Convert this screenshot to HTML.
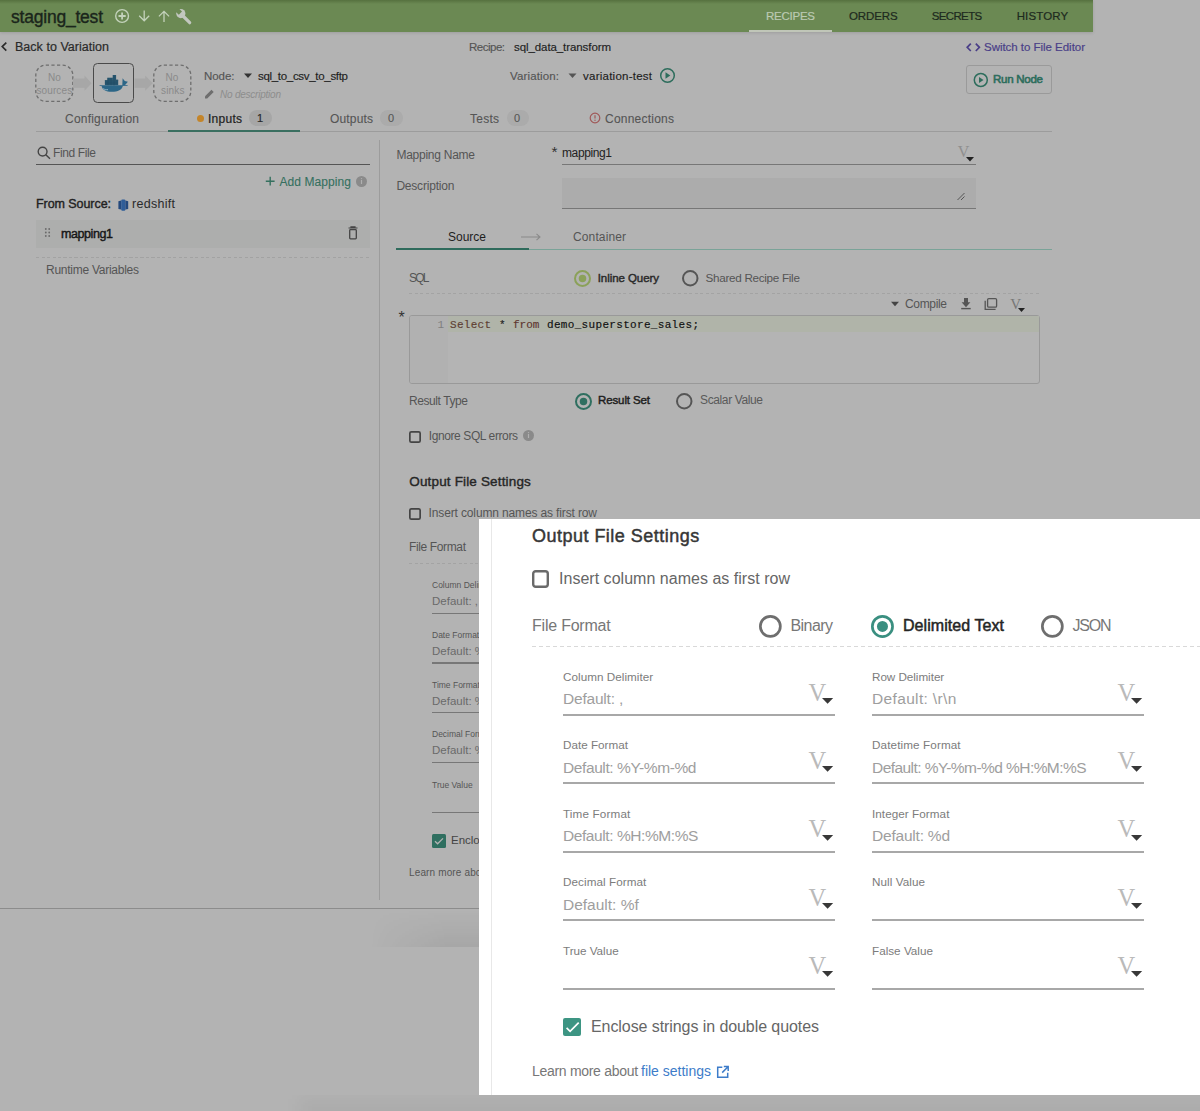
<!DOCTYPE html>
<html><head><meta charset="utf-8"><title>staging_test</title>
<style>
html,body{margin:0;padding:0;}
body{width:1200px;height:1111px;position:relative;overflow:hidden;background:#b3b3b3;font-family:"Liberation Sans",sans-serif;}
.t{position:absolute;white-space:nowrap;line-height:1;}
.r{position:absolute;}
svg.r{overflow:visible;}
</style></head><body>
<div class="r" style="left:0px;top:0px;width:1093px;height:32px;background:#6b8953;box-shadow:0 1px 3px rgba(0,0,0,0.12);"></div>
<div class="r" style="left:0px;top:0px;width:1093px;height:4px;background:linear-gradient(#56713f,#6b8953);"></div>
<div class="t" style="left:11px;top:9.00px;font-size:17.5px;color:#1a251b;font-weight:400;font-style:normal;font-family:'Liberation Sans',sans-serif;letter-spacing:-0.215px;-webkit-text-stroke:0.35px #1a251b;">staging_test</div>
<svg class="r" style="left:112px;top:6px" width="84" height="22" viewBox="112 6 84 22">
<g fill="none" stroke="#c3d2bb" stroke-linecap="butt">
<circle cx="122.1" cy="16" r="6.4" stroke-width="1.4"/><path d="M122.1 12.4v7.2M118.5 16h7.2" stroke-width="1.8"/>
<path d="M144.2 10.4v10.4M139.2 15.8l5 5 5-5" stroke-width="1.3"/>
<path d="M164 22v-10.6M158.9 16.4l5.1-5.1 5.1 5.1" stroke-width="1.3"/>
</g>
<path d="M181.5 14.5l8.2 8.2" stroke="#c2c7bf" stroke-width="3.2" stroke-linecap="round"/>
<circle cx="180.8" cy="13.6" r="4.6" fill="#c2c7bf"/>
<path d="M175.2 11.2l3.2-3.2 3.6 3.6-3.2 3.2z" fill="#6b8953"/>
</svg>
<div class="t" style="left:766px;top:11.00px;font-size:11.5px;color:#bccab3;font-weight:400;font-style:normal;font-family:'Liberation Sans',sans-serif;letter-spacing:-0.248px;-webkit-text-stroke:0.2px #bccab3;">RECIPES</div>
<div class="t" style="left:849px;top:11.00px;font-size:11.5px;color:#1d2a1e;font-weight:400;font-style:normal;font-family:'Liberation Sans',sans-serif;letter-spacing:-0.100px;-webkit-text-stroke:0.2px #1d2a1e;">ORDERS</div>
<div class="t" style="left:931.7px;top:11.00px;font-size:11.5px;color:#1d2a1e;font-weight:400;font-style:normal;font-family:'Liberation Sans',sans-serif;letter-spacing:-0.636px;-webkit-text-stroke:0.2px #1d2a1e;">SECRETS</div>
<div class="t" style="left:1016.7px;top:11.00px;font-size:11.5px;color:#1d2a1e;font-weight:400;font-style:normal;font-family:'Liberation Sans',sans-serif;letter-spacing:0.117px;-webkit-text-stroke:0.2px #1d2a1e;">HISTORY</div>
<div class="r" style="left:749px;top:30px;width:83px;height:2px;background:#c0c6b8;"></div>
<svg class="r" style="left:0px;top:40px" width="10" height="14" viewBox="0 40 10 14"><path d="M6.3 42.6L2.2 46.6l4.1 4" fill="none" stroke="#2a2a2a" stroke-width="1.6"/></svg>
<div class="t" style="left:15px;top:41.00px;font-size:12.5px;color:#2a2a2a;font-weight:400;font-style:normal;font-family:'Liberation Sans',sans-serif;letter-spacing:0.027px;-webkit-text-stroke:0.2px #2a2a2a;">Back to Variation</div>
<div class="t" style="left:469px;top:42.00px;font-size:11.5px;color:#555;font-weight:400;font-style:normal;font-family:'Liberation Sans',sans-serif;letter-spacing:-0.498px;-webkit-text-stroke:0.15px #555;">Recipe:</div>
<div class="t" style="left:514px;top:42.00px;font-size:11.5px;color:#1e1e1e;font-weight:400;font-style:normal;font-family:'Liberation Sans',sans-serif;letter-spacing:-0.084px;-webkit-text-stroke:0.15px #1e1e1e;">sql_data_transform</div>
<svg class="r" style="left:964px;top:41px" width="20" height="12" viewBox="964 41 20 12"><path d="M970.8 43.6L967.2 47.3l3.6 3.7M975.8 43.6l3.6 3.7-3.6 3.7" fill="none" stroke="#4a3f88" stroke-width="1.7"/></svg>
<div class="t" style="left:984px;top:42.00px;font-size:11.5px;color:#4a3f88;font-weight:400;font-style:normal;font-family:'Liberation Sans',sans-serif;letter-spacing:-0.031px;-webkit-text-stroke:0.2px #4a3f88;">Switch to File Editor</div>
<svg class="r" style="left:33px;top:62px" width="162" height="44" viewBox="33 62 162 44">
<rect x="35.8" y="65.2" width="37" height="36.2" rx="10" fill="none" stroke="#6e6e6e" stroke-width="1.3" stroke-dasharray="3.2 2.4"/>
<rect x="153.8" y="65.2" width="37" height="36.2" rx="10" fill="none" stroke="#6e6e6e" stroke-width="1.3" stroke-dasharray="3.2 2.4"/>
<path d="M73 78.6h11.5v-3l7.1 7.6-7.1 7.6v-3h-11.5z" fill="#a7a7a7"/>
<path d="M134.5 78.6h10.7v-3l7.5 7.6-7.5 7.6v-3h-10.7z" fill="#a7a7a7"/>
</svg>
<div class="t" style="left:47.9px;top:73.00px;font-size:10px;color:#8a8a8a;font-weight:400;font-style:normal;font-family:'Liberation Sans',sans-serif;letter-spacing:0.017px;">No</div>
<div class="t" style="left:36.4px;top:86.00px;font-size:10px;color:#8a8a8a;font-weight:400;font-style:normal;font-family:'Liberation Sans',sans-serif;letter-spacing:0.131px;">sources</div>
<div class="t" style="left:165.5px;top:73.00px;font-size:10px;color:#8a8a8a;font-weight:400;font-style:normal;font-family:'Liberation Sans',sans-serif;letter-spacing:0.017px;">No</div>
<div class="t" style="left:161px;top:86.00px;font-size:10px;color:#8a8a8a;font-weight:400;font-style:normal;font-family:'Liberation Sans',sans-serif;letter-spacing:0.179px;">sinks</div>
<div class="r" style="left:92.5px;top:62.6px;width:41.6px;height:40.8px;border:1.5px solid #4a4a4a;border-radius:4.5px;box-sizing:border-box;"></div>
<svg class="r" style="left:96px;top:70px" width="36" height="26" viewBox="96 70 36 26">
<g fill="#27566f">
<rect x="104.9" y="80.2" width="13.3" height="5"/>
<rect x="107.3" y="77.7" width="5.6" height="3"/>
<rect x="112.7" y="75" width="3.4" height="5.6"/>
<rect x="116" y="79.6" width="2.2" height="1"/>
</g>
<path d="M99.6 85.3h28v.6h-4.8c-.6 3.6-4.9 5.9-11 5.9-5.9 0-9.6-2.4-10.2-5.9h-2z" fill="#2c6687"/>
<path d="M122.3 85.8l.3-7.5 2.2 2.8 3.1.6-3 3.6z" fill="#2c6687"/>
<path d="M104.8 80.7h13M104.8 83h13M108 78.2v7M111 78.2v7M114 75.5v10" stroke="#214a60" stroke-width=".5"/>
<path d="M103.2 88.6c1.3.9 3 1.3 4.8 1.1" stroke="#8fb3c6" stroke-width="1" fill="none"/>
</svg>
<div class="t" style="left:204px;top:71.00px;font-size:11.5px;color:#555;font-weight:400;font-style:normal;font-family:'Liberation Sans',sans-serif;letter-spacing:-0.071px;-webkit-text-stroke:0.15px #555;">Node:</div>
<svg class="r" style="left:242px;top:72px" width="12" height="8" viewBox="242 72 12 8"><path d="M244 73.5h8l-4 4.5z" fill="#333"/></svg>
<div class="t" style="left:258px;top:71.00px;font-size:11.5px;color:#1e1e1e;font-weight:400;font-style:normal;font-family:'Liberation Sans',sans-serif;letter-spacing:-0.309px;-webkit-text-stroke:0.15px #1e1e1e;">sql_to_csv_to_sftp</div>
<svg class="r" style="left:204px;top:88px" width="12" height="12" viewBox="204 88 12 12"><path d="M205 98.5v-2.2l6.5-6.5 2.2 2.2-6.5 6.5z" fill="#6e6e6e"/></svg>
<div class="t" style="left:220px;top:90.00px;font-size:10px;color:#8d8d8d;font-weight:400;font-style:italic;font-family:'Liberation Sans',sans-serif;letter-spacing:-0.224px;">No description</div>
<div class="t" style="left:510px;top:71.00px;font-size:11.5px;color:#555;font-weight:400;font-style:normal;font-family:'Liberation Sans',sans-serif;letter-spacing:0.141px;-webkit-text-stroke:0.15px #555;">Variation:</div>
<svg class="r" style="left:566px;top:72px" width="12" height="8" viewBox="566 72 12 8"><path d="M568.5 73.5h8l-4 4.5z" fill="#555"/></svg>
<div class="t" style="left:583px;top:71.00px;font-size:11.5px;color:#1e1e1e;font-weight:400;font-style:normal;font-family:'Liberation Sans',sans-serif;letter-spacing:0.244px;-webkit-text-stroke:0.15px #1e1e1e;">variation-test</div>
<svg class="r" style="left:658px;top:66px" width="20" height="20" viewBox="658 66 20 20"><circle cx="667.5" cy="75.5" r="6.8" fill="none" stroke="#2d6d5c" stroke-width="1.5"/><path d="M665.5 72.3v6.4l4.8-3.2z" fill="#2d6d5c"/></svg>
<div class="r" style="left:966px;top:65px;width:86px;height:29px;border:1px solid #9a9a9a;border-radius:3px;box-sizing:border-box;"></div>
<svg class="r" style="left:972px;top:72px" width="18" height="18" viewBox="972 72 18 18"><circle cx="980.8" cy="80" r="6.5" fill="none" stroke="#2d6d5c" stroke-width="1.5"/><path d="M979 77v6l4.5-3z" fill="#2d6d5c"/></svg>
<div class="t" style="left:993px;top:74.00px;font-size:11.5px;color:#2d6d5c;font-weight:400;font-style:normal;font-family:'Liberation Sans',sans-serif;letter-spacing:-0.254px;-webkit-text-stroke:0.6px #2d6d5c;">Run Node</div>
<div class="t" style="left:65px;top:113.00px;font-size:12px;color:#555;font-weight:400;font-style:normal;font-family:'Liberation Sans',sans-serif;letter-spacing:0.219px;-webkit-text-stroke:0.1px #555;">Configuration</div>
<div class="r" style="left:197px;top:114.5px;width:7px;height:7px;border-radius:50%;background:#c4852a"></div>
<div class="t" style="left:208px;top:113.00px;font-size:12px;color:#1e1e1e;font-weight:400;font-style:normal;font-family:'Liberation Sans',sans-serif;letter-spacing:0.263px;-webkit-text-stroke:0.2px #1e1e1e;">Inputs</div>
<div class="r" style="left:249px;top:110px;width:23px;height:16px;background:#a6a6a6;border-radius:8px;"></div>
<div class="t" style="left:257px;top:113.00px;font-size:11px;color:#2a2a2a;font-weight:400;font-style:normal;font-family:'Liberation Sans',sans-serif;-webkit-text-stroke:0.2px #2a2a2a;">1</div>
<div class="t" style="left:330px;top:113.00px;font-size:12px;color:#555;font-weight:400;font-style:normal;font-family:'Liberation Sans',sans-serif;letter-spacing:0.163px;-webkit-text-stroke:0.1px #555;">Outputs</div>
<div class="r" style="left:380px;top:110px;width:23px;height:16px;background:#ababab;border-radius:8px;"></div>
<div class="t" style="left:388px;top:113.00px;font-size:11px;color:#555;font-weight:400;font-style:normal;font-family:'Liberation Sans',sans-serif;-webkit-text-stroke:0.1px #555;">0</div>
<div class="t" style="left:470px;top:113.00px;font-size:12px;color:#555;font-weight:400;font-style:normal;font-family:'Liberation Sans',sans-serif;letter-spacing:0.248px;-webkit-text-stroke:0.1px #555;">Tests</div>
<div class="r" style="left:507px;top:110px;width:22px;height:16px;background:#ababab;border-radius:8px;"></div>
<div class="t" style="left:514px;top:113.00px;font-size:11px;color:#555;font-weight:400;font-style:normal;font-family:'Liberation Sans',sans-serif;-webkit-text-stroke:0.1px #555;">0</div>
<svg class="r" style="left:588px;top:111px" width="14" height="14" viewBox="588 111 14 14"><circle cx="595" cy="118" r="4.8" fill="none" stroke="#a05858" stroke-width="1.2"/><path d="M595 115.3v3.3" stroke="#a05858" stroke-width="1.2"/><circle cx="595" cy="120.3" r=".7" fill="#a05858"/></svg>
<div class="t" style="left:605px;top:113.00px;font-size:12px;color:#555;font-weight:400;font-style:normal;font-family:'Liberation Sans',sans-serif;letter-spacing:0.230px;-webkit-text-stroke:0.1px #555;">Connections</div>
<div class="r" style="left:36px;top:131px;width:1016px;height:1px;background:#9c9c9c;"></div>
<div class="r" style="left:168px;top:130px;width:132px;height:2px;background:#3a6f60;"></div>
<svg class="r" style="left:36px;top:145px" width="16" height="16" viewBox="36 145 16 16"><circle cx="42.6" cy="151.6" r="4.4" fill="none" stroke="#444" stroke-width="1.4"/><path d="M45.8 154.8l4.2 4" stroke="#444" stroke-width="1.5"/></svg>
<div class="t" style="left:53px;top:147.00px;font-size:12px;color:#555;font-weight:400;font-style:normal;font-family:'Liberation Sans',sans-serif;letter-spacing:-0.376px;">Find File</div>
<div class="r" style="left:36px;top:164px;width:334px;height:1.2px;background:#555;"></div>
<svg class="r" style="left:264px;top:175px" width="12" height="12" viewBox="264 175 12 12"><path d="M270.2 176.8v8.8M265.8 181.2h8.8" stroke="#35705f" stroke-width="1.4"/></svg>
<div class="t" style="left:279.5px;top:176.00px;font-size:12px;color:#35705f;font-weight:400;font-style:normal;font-family:'Liberation Sans',sans-serif;letter-spacing:0.079px;-webkit-text-stroke:0.1px #35705f;">Add Mapping</div>
<svg class="r" style="left:355px;top:175px" width="13" height="13" viewBox="355 175 13 13"><circle cx="361.5" cy="181.5" r="5.5" fill="#8a8a8a"/><path d="M361.5 180v4" stroke="#b0b0b0" stroke-width="1.2"/><circle cx="361.5" cy="178.6" r=".7" fill="#b0b0b0"/></svg>
<div class="t" style="left:36px;top:198.00px;font-size:12.5px;color:#222;font-weight:400;font-style:normal;font-family:'Liberation Sans',sans-serif;letter-spacing:-0.064px;-webkit-text-stroke:0.38px #222;">From Source:</div>
<svg class="r" style="left:117px;top:198px" width="13" height="14" viewBox="117 198 13 14"><path d="M118.4 201.2l2.8-.6v9l-2.8-.6z" fill="#24497d"/><rect x="121.2" y="199.6" width="4.2" height="11.1" rx="1.2" fill="#2f5d98"/><path d="M125.4 200.6l2.8.6v7.8l-2.8.6z" fill="#24497d"/></svg>
<div class="t" style="left:132px;top:198.00px;font-size:12.5px;color:#2a2a2a;font-weight:400;font-style:normal;font-family:'Liberation Sans',sans-serif;letter-spacing:0.287px;">redshift</div>
<div class="r" style="left:36px;top:220px;width:334px;height:27.5px;background:#adaead;"></div>
<svg class="r" style="left:43px;top:226px" width="10" height="14" viewBox="43 226 10 14"><g fill="#6a6a6a"><circle cx="45.8" cy="229" r=".9"/><circle cx="49.2" cy="229" r=".9"/><circle cx="45.8" cy="232.5" r=".9"/><circle cx="49.2" cy="232.5" r=".9"/><circle cx="45.8" cy="236" r=".9"/><circle cx="49.2" cy="236" r=".9"/></g></svg>
<div class="t" style="left:61px;top:228.00px;font-size:12.5px;color:#161616;font-weight:400;font-style:normal;font-family:'Liberation Sans',sans-serif;letter-spacing:-0.414px;-webkit-text-stroke:0.42px #161616;">mapping1</div>
<svg class="r" style="left:346px;top:225px" width="14" height="16" viewBox="346 225 14 16"><path d="M348.5 228h9M351 228v-1.2h4v1.2" fill="none" stroke="#444" stroke-width="1.2"/><rect x="349.7" y="229.6" width="6.6" height="9.2" rx=".8" fill="none" stroke="#444" stroke-width="1.3"/></svg>
<div class="r" style="left:36px;top:256.5px;width:334px;height:1px;background:repeating-linear-gradient(90deg,#a2a2a2 0 3px,transparent 3px 5.5px);"></div>
<div class="t" style="left:46px;top:264.00px;font-size:12px;color:#555;font-weight:400;font-style:normal;font-family:'Liberation Sans',sans-serif;letter-spacing:-0.259px;">Runtime Variables</div>
<div class="r" style="left:379px;top:140px;width:1px;height:760px;background:#9c9c9c;"></div>
<div class="r" style="left:0px;top:908px;width:480px;height:1.3px;background:#8c8c8c;"></div>
<div class="t" style="left:396.4px;top:149.00px;font-size:12px;color:#555;font-weight:400;font-style:normal;font-family:'Liberation Sans',sans-serif;letter-spacing:-0.252px;">Mapping Name</div>
<div class="t" style="left:551.5px;top:144.00px;font-size:15.5px;color:#333;font-weight:400;font-style:normal;font-family:'Liberation Sans',sans-serif;">*</div>
<div class="t" style="left:562px;top:147.00px;font-size:12px;color:#222;font-weight:400;font-style:normal;font-family:'Liberation Sans',sans-serif;letter-spacing:-0.386px;">mapping1</div>
<div class="r" style="left:562px;top:164px;width:414px;height:1.3px;background:#777;"></div>
<div class="t" style="left:957.70px;top:143.98px;font-size:16px;color:#8f8f8f;font-family:'Liberation Serif',serif;">V</div>
<svg class="r" style="left:966.00px;top:157.00px" width="8" height="4.5" viewBox="0 0 8 4.5"><path d="M0 0h8l-4.0 4.5z" fill="#222"/></svg>
<div class="t" style="left:396.4px;top:180.00px;font-size:12px;color:#555;font-weight:400;font-style:normal;font-family:'Liberation Sans',sans-serif;letter-spacing:-0.202px;">Description</div>
<div class="r" style="left:562px;top:178px;width:414px;height:30.5px;background:#acacac;border-bottom:1.3px solid #777;box-sizing:border-box;"></div>
<svg class="r" style="left:955px;top:190px" width="14" height="12" viewBox="955 190 14 12"><path d="M957.5 200l7-7M961 200l3.5-3.5" stroke="#555" stroke-width="1"/></svg>
<div class="t" style="left:448px;top:231.00px;font-size:12px;color:#1e1e1e;font-weight:400;font-style:normal;font-family:'Liberation Sans',sans-serif;letter-spacing:-0.004px;">Source</div>
<svg class="r" style="left:519px;top:232px" width="24" height="10" viewBox="519 232 24 10"><path d="M521 237h19M536.5 233.8l3.5 3.2-3.5 3.2" fill="none" stroke="#8a8a8a" stroke-width="1.1"/></svg>
<div class="t" style="left:573px;top:231.00px;font-size:12px;color:#555;font-weight:400;font-style:normal;font-family:'Liberation Sans',sans-serif;letter-spacing:0.122px;">Container</div>
<div class="r" style="left:396px;top:248.5px;width:656px;height:1px;background:#7aa398;"></div>
<div class="r" style="left:396px;top:247.5px;width:133px;height:2px;background:#2f6b5c;"></div>
<div class="t" style="left:409px;top:272.00px;font-size:12px;color:#555;font-weight:400;font-style:normal;font-family:'Liberation Sans',sans-serif;letter-spacing:-1.806px;">SQL</div>
<svg class="r" style="left:572.20px;top:267.80px" width="21.0" height="21.0"><circle cx="10.5" cy="10.5" r="7.50" fill="none" stroke="#8ba159" stroke-width="2"/><circle cx="10.5" cy="10.5" r="3.75" fill="#8ba159"/></svg>
<div class="t" style="left:597.7px;top:273.00px;font-size:11.5px;color:#2a2a2a;font-weight:400;font-style:normal;font-family:'Liberation Sans',sans-serif;letter-spacing:-0.064px;-webkit-text-stroke:0.45px #2a2a2a;">Inline Query</div>
<svg class="r" style="left:680.05px;top:268.05px" width="20.5" height="20.5"><circle cx="10.25" cy="10.25" r="7.25" fill="none" stroke="#555" stroke-width="2"/></svg>
<div class="t" style="left:705.6px;top:272.00px;font-size:11.7px;color:#555;font-weight:400;font-style:normal;font-family:'Liberation Sans',sans-serif;letter-spacing:-0.300px;">Shared Recipe File</div>
<div class="r" style="left:409px;top:293px;width:631px;height:1px;background:repeating-linear-gradient(90deg,#a3a3a3 0 3px,transparent 3px 5.5px);"></div>
<svg class="r" style="left:889px;top:300px" width="12" height="8" viewBox="889 300 12 8"><path d="M891 301.8h8l-4 4.5z" fill="#444"/></svg>
<div class="t" style="left:905px;top:298.00px;font-size:12px;color:#555;font-weight:400;font-style:normal;font-family:'Liberation Sans',sans-serif;letter-spacing:-0.336px;">Compile</div>
<svg class="r" style="left:958px;top:295px" width="45" height="18" viewBox="958 295 45 18">
<path d="M964 298h4v4.3h2.4l-4.4 5-4.4-5h2.4z" fill="#555"/><path d="M961.2 308.6h9.5" stroke="#555" stroke-width="1.4"/>
<rect x="987.6" y="298.6" width="9" height="8.6" rx="1.2" fill="none" stroke="#555" stroke-width="1.3"/><path d="M985.2 300.8v8.6h10.4" fill="none" stroke="#555" stroke-width="1.3"/>
</svg>
<div class="t" style="left:1010.30px;top:297.32px;font-size:15px;color:#777;font-family:'Liberation Serif',serif;">V</div>
<svg class="r" style="left:1017.50px;top:308.00px" width="7" height="4" viewBox="0 0 7 4"><path d="M0 0h7l-3.5 4z" fill="#222"/></svg>
<div class="t" style="left:398.5px;top:310.00px;font-size:16px;color:#333;font-weight:400;font-style:normal;font-family:'Liberation Sans',sans-serif;">*</div>
<div class="r" style="left:409px;top:315px;width:631px;height:69px;border:1px solid #999;border-radius:3px;box-sizing:border-box;background:#b4b4b4;"></div>
<div class="r" style="left:410px;top:316px;width:37.5px;height:67px;background:#b1b1b1;border-radius:2px 0 0 2px;"></div>
<div class="r" style="left:447.5px;top:316px;width:591px;height:15.5px;background:#b0b4a9;"></div>
<div class="t" style="left:437.5px;top:320.00px;font-size:11px;color:#7e7e7e;font-weight:400;font-style:normal;font-family:'Liberation Mono',monospace;">1</div>
<div class="t" style="left:450px;top:320.00px;font-size:11px;color:#5e3e32;font-weight:400;font-style:normal;font-family:'Liberation Mono',monospace;letter-spacing:0.278px;-webkit-text-stroke:0.15px #5e3e32;">Select</div>
<div class="t" style="left:499px;top:320.00px;font-size:11px;color:#222;font-weight:400;font-style:normal;font-family:'Liberation Mono',monospace;-webkit-text-stroke:0.15px #222;">*</div>
<div class="t" style="left:513px;top:320.00px;font-size:11px;color:#5e3630;font-weight:400;font-style:normal;font-family:'Liberation Mono',monospace;-webkit-text-stroke:0.15px #5e3630;">from</div>
<div class="t" style="left:547px;top:320.00px;font-size:11px;color:#111;font-weight:400;font-style:normal;font-family:'Liberation Mono',monospace;letter-spacing:0.322px;-webkit-text-stroke:0.15px #111;">demo_superstore_sales;</div>
<div class="t" style="left:409px;top:395.00px;font-size:12px;color:#555;font-weight:400;font-style:normal;font-family:'Liberation Sans',sans-serif;letter-spacing:-0.414px;">Result Type</div>
<svg class="r" style="left:572.50px;top:390.50px" width="21.0" height="21.0"><circle cx="10.5" cy="10.5" r="7.50" fill="none" stroke="#2f6f60" stroke-width="2"/><circle cx="10.5" cy="10.5" r="3.75" fill="#2f6f60"/></svg>
<div class="t" style="left:598px;top:395.00px;font-size:11.5px;color:#1e1e1e;font-weight:400;font-style:normal;font-family:'Liberation Sans',sans-serif;letter-spacing:-0.117px;-webkit-text-stroke:0.45px #1e1e1e;">Result Set</div>
<svg class="r" style="left:674.05px;top:390.75px" width="20.5" height="20.5"><circle cx="10.25" cy="10.25" r="7.25" fill="none" stroke="#555" stroke-width="2"/></svg>
<div class="t" style="left:700px;top:394.00px;font-size:12px;color:#5a5a5a;font-weight:400;font-style:normal;font-family:'Liberation Sans',sans-serif;letter-spacing:-0.377px;">Scalar Value</div>
<svg class="r" style="left:407px;top:428.8px" width="16" height="16"><rect x="2.85" y="2.85" width="10.3" height="10.3" rx="1.5" fill="none" stroke="#444" stroke-width="1.7"/></svg>
<div class="t" style="left:428.7px;top:430.00px;font-size:12px;color:#555;font-weight:400;font-style:normal;font-family:'Liberation Sans',sans-serif;letter-spacing:-0.393px;">Ignore SQL errors</div>
<svg class="r" style="left:522px;top:429px" width="13" height="13" viewBox="522 429 13 13"><circle cx="528.5" cy="435.5" r="5.5" fill="#8a8a8a"/><path d="M528.5 434v4" stroke="#b0b0b0" stroke-width="1.2"/><circle cx="528.5" cy="432.6" r=".7" fill="#b0b0b0"/></svg>
<div class="t" style="left:409.3px;top:475.00px;font-size:13.5px;color:#262626;font-weight:400;font-style:normal;font-family:'Liberation Sans',sans-serif;letter-spacing:0.155px;-webkit-text-stroke:0.4px #262626;">Output File Settings</div>
<svg class="r" style="left:407px;top:505.5px" width="16" height="16"><rect x="2.85" y="2.85" width="10.3" height="10.3" rx="1.5" fill="none" stroke="#444" stroke-width="1.7"/></svg>
<div class="t" style="left:428.6px;top:507.00px;font-size:12px;color:#555;font-weight:400;font-style:normal;font-family:'Liberation Sans',sans-serif;letter-spacing:-0.139px;">Insert column names as first row</div>
<div class="t" style="left:409px;top:541.00px;font-size:12px;color:#555;font-weight:400;font-style:normal;font-family:'Liberation Sans',sans-serif;letter-spacing:-0.367px;">File Format</div>
<div class="r" style="left:409px;top:563px;width:70px;height:1px;background:repeating-linear-gradient(90deg,#a3a3a3 0 3px,transparent 3px 5.5px);"></div>
<div class="t" style="left:432px;top:581.00px;font-size:8.5px;color:#555;font-weight:400;font-style:normal;font-family:'Liberation Sans',sans-serif;">Column Delimiter</div>
<div class="t" style="left:432px;top:596.00px;font-size:11.5px;color:#6a6a6a;font-weight:400;font-style:normal;font-family:'Liberation Sans',sans-serif;">Default: ,</div>
<div class="r" style="left:432px;top:612.5px;width:50px;height:1.3px;background:#777;"></div>
<div class="t" style="left:432px;top:631.00px;font-size:8.5px;color:#555;font-weight:400;font-style:normal;font-family:'Liberation Sans',sans-serif;">Date Format</div>
<div class="t" style="left:432px;top:646.00px;font-size:11.5px;color:#6a6a6a;font-weight:400;font-style:normal;font-family:'Liberation Sans',sans-serif;">Default: %Y</div>
<div class="r" style="left:432px;top:662.3px;width:50px;height:1.3px;background:#777;"></div>
<div class="t" style="left:432px;top:681.00px;font-size:8.5px;color:#555;font-weight:400;font-style:normal;font-family:'Liberation Sans',sans-serif;">Time Format</div>
<div class="t" style="left:432px;top:696.00px;font-size:11.5px;color:#6a6a6a;font-weight:400;font-style:normal;font-family:'Liberation Sans',sans-serif;">Default: %H</div>
<div class="r" style="left:432px;top:712.1px;width:50px;height:1.3px;background:#777;"></div>
<div class="t" style="left:432px;top:730.00px;font-size:8.5px;color:#555;font-weight:400;font-style:normal;font-family:'Liberation Sans',sans-serif;">Decimal Format</div>
<div class="t" style="left:432px;top:745.00px;font-size:11.5px;color:#6a6a6a;font-weight:400;font-style:normal;font-family:'Liberation Sans',sans-serif;">Default: %f</div>
<div class="r" style="left:432px;top:761.9px;width:50px;height:1.3px;background:#777;"></div>
<div class="t" style="left:432px;top:781.00px;font-size:8.5px;color:#555;font-weight:400;font-style:normal;font-family:'Liberation Sans',sans-serif;">True Value</div>
<div class="r" style="left:432px;top:811.5px;width:50px;height:1.3px;background:#777;"></div>
<div class="r" style="left:432px;top:834px;width:13.5px;height:13.5px;background:#2f6f60;border-radius:1.5px;"></div>
<svg class="r" style="left:432px;top:834px" width="14" height="14" viewBox="0 0 14 14"><path d="M3 7.2l2.6 2.6L11 4.4" fill="none" stroke="#b3b3b3" stroke-width="1.3"/></svg>
<div class="t" style="left:451px;top:835.00px;font-size:11.5px;color:#444;font-weight:400;font-style:normal;font-family:'Liberation Sans',sans-serif;">Enclose</div>
<div class="t" style="left:409px;top:868.00px;font-size:10px;color:#555;font-weight:400;font-style:normal;font-family:'Liberation Sans',sans-serif;letter-spacing:0.138px;">Learn more about</div>
<div class="r" style="left:370px;top:909.5px;width:110px;height:37.7px;background:linear-gradient(rgba(0,0,0,0),rgba(0,0,0,0.065));-webkit-mask-image:linear-gradient(90deg,transparent,#000 70%);"></div>
<div class="r" style="left:0;top:1094.5px;width:1200px;height:16.5px;overflow:hidden"><div class="r" style="left:300px;top:4px;width:1000px;height:40px;background:rgba(0,0,0,0.04);filter:blur(8px)"></div></div>
<div class="r" style="left:479px;top:519px;width:721px;height:575.5px;background:#fff;"></div>
<div class="r" style="left:491px;top:519px;width:1px;height:575.5px;background:#e8e8e8;"></div>
<div class="t" style="left:532px;top:527.00px;font-size:18px;color:#363636;font-weight:400;font-style:normal;font-family:'Liberation Sans',sans-serif;letter-spacing:0.480px;-webkit-text-stroke:0.45px #363636;">Output File Settings</div>
<svg class="r" style="left:530px;top:568px" width="21" height="22"><rect x="3.2" y="3.2" width="14.6" height="15.6" rx="2.5" fill="none" stroke="#6a6a6a" stroke-width="2.4"/></svg>
<div class="t" style="left:559px;top:571.00px;font-size:16px;color:#666;font-weight:400;font-style:normal;font-family:'Liberation Sans',sans-serif;letter-spacing:0.023px;">Insert column names as first row</div>
<div class="t" style="left:532px;top:618.00px;font-size:16px;color:#777;font-weight:400;font-style:normal;font-family:'Liberation Sans',sans-serif;letter-spacing:-0.219px;">File Format</div>
<svg class="r" style="left:756.75px;top:613.05px" width="26.7" height="26.7"><circle cx="13.35" cy="13.35" r="10.00" fill="none" stroke="#6e6e6e" stroke-width="2.7"/></svg>
<div class="t" style="left:790.5px;top:618.00px;font-size:16px;color:#777;font-weight:400;font-style:normal;font-family:'Liberation Sans',sans-serif;letter-spacing:-0.570px;">Binary</div>
<svg class="r" style="left:868.85px;top:612.95px" width="26.9" height="26.9"><circle cx="13.45" cy="13.45" r="10.10" fill="none" stroke="#3a8f80" stroke-width="2.7"/><circle cx="13.45" cy="13.45" r="5.5" fill="#3a8f80"/></svg>
<div class="t" style="left:903px;top:618.00px;font-size:16px;color:#252525;font-weight:400;font-style:normal;font-family:'Liberation Sans',sans-serif;letter-spacing:0.063px;-webkit-text-stroke:0.5px #252525;">Delimited Text</div>
<svg class="r" style="left:1038.65px;top:613.05px" width="26.7" height="26.7"><circle cx="13.35" cy="13.35" r="10.00" fill="none" stroke="#6e6e6e" stroke-width="2.7"/></svg>
<div class="t" style="left:1072.5px;top:618.00px;font-size:16px;color:#777;font-weight:400;font-style:normal;font-family:'Liberation Sans',sans-serif;letter-spacing:-1.224px;">JSON</div>
<div class="r" style="left:532px;top:646.2px;width:668px;height:1.3px;background:repeating-linear-gradient(90deg,#d9d9d9 0 3.5px,transparent 3.5px 7.0px);"></div>
<div class="t" style="left:563px;top:671.00px;font-size:11.7px;color:#7c7c7c;font-weight:400;font-style:normal;font-family:'Liberation Sans',sans-serif;letter-spacing:0.032px;">Column Delimiter</div>
<div class="t" style="left:563px;top:691.00px;font-size:15.5px;color:#9e9e9e;font-weight:400;font-style:normal;font-family:'Liberation Sans',sans-serif;letter-spacing:-0.203px;">Default: ,</div>
<div class="r" style="left:563px;top:714.0px;width:272px;height:2px;background:#a8a8a8;"></div>
<div class="t" style="left:808.60px;top:680.50px;font-size:24.5px;color:#bababa;font-family:'Liberation Serif',serif;">V</div>
<svg class="r" style="left:822.30px;top:697.80px" width="11.2" height="5.8" viewBox="0 0 11.2 5.8"><path d="M0 0h11.2l-5.6 5.8z" fill="#383838"/></svg>
<div class="t" style="left:872px;top:671.00px;font-size:11.7px;color:#7c7c7c;font-weight:400;font-style:normal;font-family:'Liberation Sans',sans-serif;letter-spacing:-0.042px;">Row Delimiter</div>
<div class="t" style="left:872px;top:691.00px;font-size:15.5px;color:#9e9e9e;font-weight:400;font-style:normal;font-family:'Liberation Sans',sans-serif;letter-spacing:0.349px;">Default: \r\n</div>
<div class="r" style="left:872px;top:714.0px;width:272px;height:2px;background:#a8a8a8;"></div>
<div class="t" style="left:1117.60px;top:680.50px;font-size:24.5px;color:#bababa;font-family:'Liberation Serif',serif;">V</div>
<svg class="r" style="left:1131.30px;top:697.80px" width="11.2" height="5.8" viewBox="0 0 11.2 5.8"><path d="M0 0h11.2l-5.6 5.8z" fill="#383838"/></svg>
<div class="t" style="left:563px;top:739.00px;font-size:11.7px;color:#7c7c7c;font-weight:400;font-style:normal;font-family:'Liberation Sans',sans-serif;letter-spacing:-0.001px;">Date Format</div>
<div class="t" style="left:563px;top:760.00px;font-size:15.5px;color:#9e9e9e;font-weight:400;font-style:normal;font-family:'Liberation Sans',sans-serif;letter-spacing:-0.402px;">Default: %Y-%m-%d</div>
<div class="r" style="left:563px;top:782.4px;width:272px;height:2px;background:#a8a8a8;"></div>
<div class="t" style="left:808.60px;top:748.90px;font-size:24.5px;color:#bababa;font-family:'Liberation Serif',serif;">V</div>
<svg class="r" style="left:822.30px;top:766.20px" width="11.2" height="5.8" viewBox="0 0 11.2 5.8"><path d="M0 0h11.2l-5.6 5.8z" fill="#383838"/></svg>
<div class="t" style="left:872px;top:739.00px;font-size:11.7px;color:#7c7c7c;font-weight:400;font-style:normal;font-family:'Liberation Sans',sans-serif;letter-spacing:0.113px;">Datetime Format</div>
<div class="t" style="left:872px;top:760.00px;font-size:15.5px;color:#9e9e9e;font-weight:400;font-style:normal;font-family:'Liberation Sans',sans-serif;letter-spacing:-0.562px;">Default: %Y-%m-%d %H:%M:%S</div>
<div class="r" style="left:872px;top:782.4px;width:272px;height:2px;background:#a8a8a8;"></div>
<div class="t" style="left:1117.60px;top:748.90px;font-size:24.5px;color:#bababa;font-family:'Liberation Serif',serif;">V</div>
<svg class="r" style="left:1131.30px;top:766.20px" width="11.2" height="5.8" viewBox="0 0 11.2 5.8"><path d="M0 0h11.2l-5.6 5.8z" fill="#383838"/></svg>
<div class="t" style="left:563px;top:808.00px;font-size:11.7px;color:#7c7c7c;font-weight:400;font-style:normal;font-family:'Liberation Sans',sans-serif;letter-spacing:0.153px;">Time Format</div>
<div class="t" style="left:563px;top:828.00px;font-size:15.5px;color:#9e9e9e;font-weight:400;font-style:normal;font-family:'Liberation Sans',sans-serif;letter-spacing:-0.420px;">Default: %H:%M:%S</div>
<div class="r" style="left:563px;top:850.8px;width:272px;height:2px;background:#a8a8a8;"></div>
<div class="t" style="left:808.60px;top:817.30px;font-size:24.5px;color:#bababa;font-family:'Liberation Serif',serif;">V</div>
<svg class="r" style="left:822.30px;top:834.60px" width="11.2" height="5.8" viewBox="0 0 11.2 5.8"><path d="M0 0h11.2l-5.6 5.8z" fill="#383838"/></svg>
<div class="t" style="left:872px;top:808.00px;font-size:11.7px;color:#7c7c7c;font-weight:400;font-style:normal;font-family:'Liberation Sans',sans-serif;letter-spacing:0.060px;">Integer Format</div>
<div class="t" style="left:872px;top:828.00px;font-size:15.5px;color:#9e9e9e;font-weight:400;font-style:normal;font-family:'Liberation Sans',sans-serif;letter-spacing:-0.212px;">Default: %d</div>
<div class="r" style="left:872px;top:850.8px;width:272px;height:2px;background:#a8a8a8;"></div>
<div class="t" style="left:1117.60px;top:817.30px;font-size:24.5px;color:#bababa;font-family:'Liberation Serif',serif;">V</div>
<svg class="r" style="left:1131.30px;top:834.60px" width="11.2" height="5.8" viewBox="0 0 11.2 5.8"><path d="M0 0h11.2l-5.6 5.8z" fill="#383838"/></svg>
<div class="t" style="left:563px;top:876.00px;font-size:11.7px;color:#7c7c7c;font-weight:400;font-style:normal;font-family:'Liberation Sans',sans-serif;letter-spacing:0.065px;">Decimal Format</div>
<div class="t" style="left:563px;top:897.00px;font-size:15.5px;color:#9e9e9e;font-weight:400;font-style:normal;font-family:'Liberation Sans',sans-serif;letter-spacing:-0.011px;">Default: %f</div>
<div class="r" style="left:563px;top:919.2px;width:272px;height:2px;background:#a8a8a8;"></div>
<div class="t" style="left:808.60px;top:885.70px;font-size:24.5px;color:#bababa;font-family:'Liberation Serif',serif;">V</div>
<svg class="r" style="left:822.30px;top:903.00px" width="11.2" height="5.8" viewBox="0 0 11.2 5.8"><path d="M0 0h11.2l-5.6 5.8z" fill="#383838"/></svg>
<div class="t" style="left:872px;top:876.00px;font-size:11.7px;color:#7c7c7c;font-weight:400;font-style:normal;font-family:'Liberation Sans',sans-serif;letter-spacing:0.060px;">Null Value</div>
<div class="r" style="left:872px;top:919.2px;width:272px;height:2px;background:#a8a8a8;"></div>
<div class="t" style="left:1117.60px;top:885.70px;font-size:24.5px;color:#bababa;font-family:'Liberation Serif',serif;">V</div>
<svg class="r" style="left:1131.30px;top:903.00px" width="11.2" height="5.8" viewBox="0 0 11.2 5.8"><path d="M0 0h11.2l-5.6 5.8z" fill="#383838"/></svg>
<div class="t" style="left:563px;top:945.00px;font-size:11.7px;color:#7c7c7c;font-weight:400;font-style:normal;font-family:'Liberation Sans',sans-serif;letter-spacing:-0.025px;">True Value</div>
<div class="r" style="left:563px;top:987.6px;width:272px;height:2px;background:#a8a8a8;"></div>
<div class="t" style="left:808.60px;top:954.10px;font-size:24.5px;color:#bababa;font-family:'Liberation Serif',serif;">V</div>
<svg class="r" style="left:822.30px;top:971.40px" width="11.2" height="5.8" viewBox="0 0 11.2 5.8"><path d="M0 0h11.2l-5.6 5.8z" fill="#383838"/></svg>
<div class="t" style="left:872px;top:945.00px;font-size:11.7px;color:#7c7c7c;font-weight:400;font-style:normal;font-family:'Liberation Sans',sans-serif;letter-spacing:0.009px;">False Value</div>
<div class="r" style="left:872px;top:987.6px;width:272px;height:2px;background:#a8a8a8;"></div>
<div class="t" style="left:1117.60px;top:954.10px;font-size:24.5px;color:#bababa;font-family:'Liberation Serif',serif;">V</div>
<svg class="r" style="left:1131.30px;top:971.40px" width="11.2" height="5.8" viewBox="0 0 11.2 5.8"><path d="M0 0h11.2l-5.6 5.8z" fill="#383838"/></svg>
<div class="r" style="left:563px;top:1018px;width:18px;height:18px;background:#3d9583;border-radius:2px;"></div>
<svg class="r" style="left:563px;top:1018px" width="18" height="18" viewBox="0 0 18 18"><path d="M3.6 9.8l3.5 3.5 8.6-8.6" fill="none" stroke="#fff" stroke-width="1.7"/></svg>
<div class="t" style="left:591px;top:1019.00px;font-size:16px;color:#666;font-weight:400;font-style:normal;font-family:'Liberation Sans',sans-serif;letter-spacing:-0.076px;">Enclose strings in double quotes</div>
<div class="t" style="left:532px;top:1064.00px;font-size:14px;color:#777;font-weight:400;font-style:normal;font-family:'Liberation Sans',sans-serif;letter-spacing:-0.300px;">Learn more about</div>
<div class="t" style="left:641px;top:1064.00px;font-size:14px;color:#3d7cc9;font-weight:400;font-style:normal;font-family:'Liberation Sans',sans-serif;letter-spacing:-0.003px;">file settings</div>
<svg class="r" style="left:716px;top:1065px" width="14" height="14" viewBox="716 1065 14 14"><path d="M722.3 1067.3h-4.6v10h10v-4.6" fill="none" stroke="#3d7cc9" stroke-width="1.5"/><path d="M723.8 1066.6h4.4v4.4M728 1066.8l-5.8 5.8" fill="none" stroke="#3d7cc9" stroke-width="1.5"/></svg>
</body></html>
